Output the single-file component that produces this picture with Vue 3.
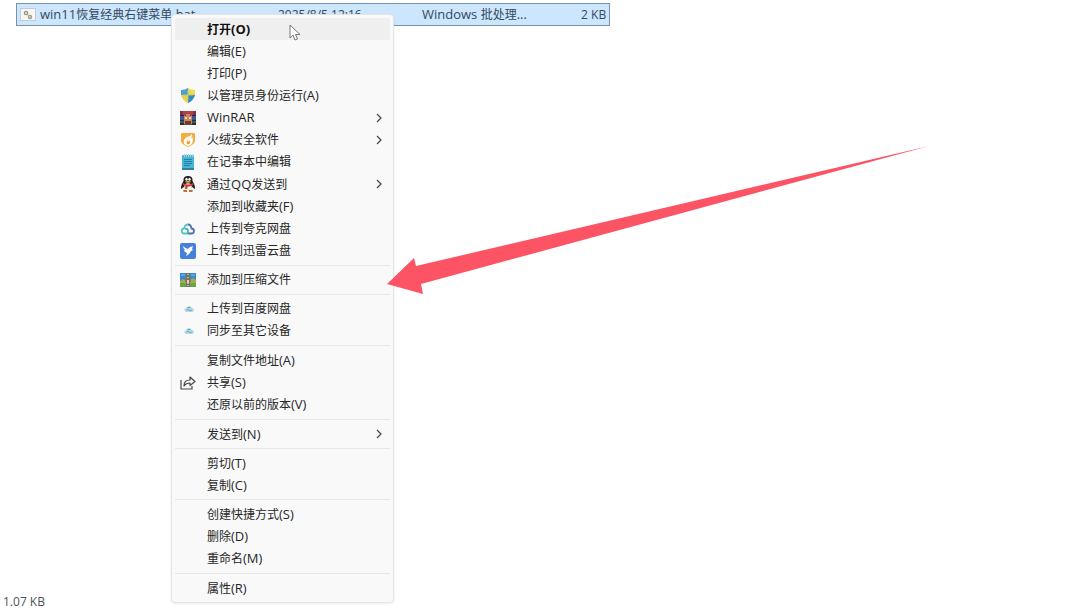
<template>
  <main class="explorer">
    <table class="file-list">
      <tbody>
        <tr>
          <td class="col-name">
            <div class="file-name">
              <svg class="file-icon" viewBox="0 0 16 14" aria-hidden="true">
                <rect x="0.5" y="0.5" width="15" height="12" fill="#f6f6f3" stroke="#c3ccd2" />
                <circle cx="6" cy="5" r="1.6" fill="none" stroke="#8b9190" stroke-width="1.4" />
                <circle cx="10" cy="9" r="1.5" fill="none" stroke="#9a9d94" stroke-width="1.4" />
                <path d="M7 6l2 2" stroke="#c4b878" stroke-width="1.5" />
              </svg>
              <span><span v-for="(part, i) in split('win11恢复经典右键菜单.bat')" :key="i" :class="{ latin: part.latin }">{{ part.text }}</span></span>
            </div>
          </td>
          <td class="col-date">2025/8/5 12:16</td>
          <td class="col-type"><span v-for="(part, i) in split('Windows 批处理...')" :key="i" :class="{ latin: part.latin }">{{ part.text }}</span></td>
          <td class="col-size">2 KB</td>
        </tr>
      </tbody>
    </table>

    <ul class="menu">
      <template v-for="(group, g) in groups" :key="g">
        <li v-if="g > 0" class="separator" role="separator"></li>
        <li v-for="item in group" :key="item.label" class="menu-row">
          <button type="button" class="menu-item" :class="{ active: item.active }">
            <span class="icon">
              <svg v-if="item.icon === 'shield'" viewBox="0 0 16 16">
                <path d="M8 0Q5 2 1 2v5h7z" fill="#4a9fd4" />
                <path d="M8 0q3 2 7 2v5H8z" fill="#f1d755" />
                <path d="M1 7h7v8Q2 12 1 7z" fill="#efce48" />
                <path d="M15 7H8v8q6-3 7-8z" fill="#2f89c6" />
                <path d="M8 2v11M3 7h10" stroke="#a8cf72" stroke-width="1" />
              </svg>
              <svg v-else-if="item.icon === 'winrar'" viewBox="0 0 16 16">
                <rect y="1" width="16" height="5" fill="#b0404c" />
                <rect y="6" width="16" height="4" fill="#3c5590" />
                <rect y="10" width="16" height="5" fill="#35604a" />
                <path d="M0 5.500h16M0 10.500h16" stroke="#3a2434" />
                <path d="M0 1h3v4H0zM13 1h3v4h-3z" fill="#7c3350" />
                <path d="M4 5l2 1V4h4v2l2-1v9H4z" fill="#c98462" />
                <path d="M5 7h2v2H5zM9 7h2v2H9z" fill="#f0d2ae" />
                <path d="M5 11h6v3H5z" fill="#73372f" />
                <path d="M0 13h4v2H0zM12 13h4v2h-4z" fill="#3a2832" />
              </svg>
              <svg v-else-if="item.icon === 'huorong'" viewBox="0 0 16 16">
                <path d="M2 1h12q1 0 1 1v7q0 3-7 6Q1 12 1 9V2q0-1 1-1z" fill="#f2ae3e" />
                <path d="M12 2q-1 2-5 3-4 2-3 6-1-1-1-3 0 5 5 6 5-1 5-6 0-2-1-3 0 1-1 2 1-3 1-5z" fill="#fffdf5" />
                <path d="M9 7q1 2-1 3-1-1 0-2-2 1-1 4 3 1 3-2 0-1-1-3z" fill="#f0982f" />
              </svg>
              <svg v-else-if="item.icon === 'notepad'" viewBox="0 0 16 16">
                <rect x="2" y="1" width="12" height="15" rx="1" fill="#48b4d6" />
                <path d="M2 14h12v1q0 1-1 1H3q-1 0-1-1z" fill="#347fa3" />
                <path d="M4 5.500h8M4 7.500h8M4 9.500h8M4 11.500h6" stroke="#2480a6" stroke-width="1" />
                <path d="M4.500 0v3M6.500 0v3M8.500 0v3M10.500 0v3M12.500 0v3" stroke="#a3d3e2" stroke-width="1" />
              </svg>
              <svg v-else-if="item.icon === 'qq'" viewBox="0 0 16 16">
                <path d="M8 0Q3 0 3.500 5L1.500 9q-1 3 0 4l2-2q4 4 9 0l2 2q1-1 0-4l-2-4Q13 0 8 0z" fill="#211d21" />
                <ellipse cx="8" cy="11" rx="3.800" ry="3.700" fill="#f7f4f1" />
                <ellipse cx="6.500" cy="3.300" rx="1.200" ry="1.500" fill="#fff" />
                <ellipse cx="9.500" cy="3.300" rx="1.200" ry="1.500" fill="#fff" />
                <ellipse cx="8" cy="5.800" rx="2.800" ry=".9" fill="#eeac35" />
                <path d="M3 7q5 3 10 0l.5 2Q11 10.500 8 10.500L7 13H5l.5-3L3 9z" fill="#d63b38" />
                <path d="M3 15q0-2 4-1v2H4zM13 15q0-2-4-1v2h3z" fill="#b9792d" />
              </svg>
              <svg v-else-if="item.icon === 'quark'" viewBox="0 0 16 16" fill="none" stroke-width="1.800">
                <path d="M8 12.500H4.500a2.500 2.500 0 0 1-.5-5Q5 3.500 8 3.500" stroke="#55c6bd" />
                <path d="M8 3.500q3 0 3.500 4a2.500 2.500 0 0 1 0 5H8" stroke="#4a76ac" />
                <path d="M8 12.500V10a2 2 0 0 0-3-2" stroke="#4aabc5" />
              </svg>
              <svg v-else-if="item.icon === 'xunlei'" viewBox="0 0 16 16">
                <rect width="16" height="16" rx="2" fill="#4680df" />
                <path d="M3 3q3 3 5 3 1-2 5-3l-1 3 1 1-2 1q-1 3-5 5l1-3q-3-1-3-3l1 0Q3 5 3 3z" fill="#fff" />
              </svg>
              <svg v-else-if="item.icon === 'archive'" viewBox="0 0 16 16">
                <rect y="1" width="16" height="8" fill="#3d87cf" />
                <rect y="9" width="16" height="6" fill="#69a643" />
                <path d="M0 9l3-2 3 2 4-1 3-2 3 2v3H0z" fill="#a0ad50" />
                <path d="M1 3h4M11 3h4" stroke="#5fa6df" stroke-width="2" />
                <rect x="6" y="1" width="4" height="14" fill="#6d7470" />
                <path d="M7 2.500h2M7 5.500h2M7 11.500h2M7 13.500h2" stroke="#c8b67f" />
                <rect x="5" y="7" width="6" height="3" fill="#94743f" />
                <rect x="7" y="8" width="2" height="3" fill="#e0d2aa" />
              </svg>
              <svg v-else-if="item.icon === 'cloud'" viewBox="0 0 16 16">
                <path d="M7 11a2 2 0 0 1-1-4q1-2 3-2t3 2a2 2 0 0 1 0 4z" fill="#b5dae8" />
                <path d="M6.500 9.500q1-2 2.500-.5t3 0M7.500 7q1.500-1.500 3 0" fill="none" stroke="#68a5be" />
              </svg>
              <svg v-else-if="item.icon === 'share'" viewBox="0 0 16 16" fill="none" stroke="#484848" stroke-width="1.200" stroke-linejoin="round">
                <path d="M1 5v9h11v-3" />
                <path d="M4 11q0-6 6-6V2l5 4.500-5 4V8Q6 8 4 11z" />
              </svg>
            </span>
            <span class="label"><span v-for="(part, i) in split(item.label)" :key="i" :class="{ latin: part.latin }">{{ part.text }}</span></span>
            <svg v-if="item.sub" class="chevron" viewBox="0 0 6 10" aria-hidden="true">
              <path d="M1 1l4 4-4 4" fill="none" stroke="#444" stroke-width="1.200" />
            </svg>
          </button>
        </li>
      </template>
    </ul>

    <svg class="cursor" viewBox="0 0 12 18" aria-hidden="true">
      <path d="M1 1v13l3-3 2 5 2.500-1-2-4.500H11z" fill="#fff" stroke="#777" stroke-linejoin="round" />
    </svg>

    <svg class="arrow" viewBox="0 0 542 148" aria-hidden="true">
      <path d="M0 138L27 112l2 8L542 0 34 138l2 10z" fill="#fc5464" />
    </svg>

    <footer class="status">1.07 KB</footer>
  </main>
</template>

<script setup>
const groups = [
  [
    { label: '打开(O)', active: true },
    { label: '编辑(E)' },
    { label: '打印(P)' },
    { label: '以管理员身份运行(A)', icon: 'shield' },
    { label: 'WinRAR', icon: 'winrar', sub: true },
    { label: '火绒安全软件', icon: 'huorong', sub: true },
    { label: '在记事本中编辑', icon: 'notepad' },
    { label: '通过QQ发送到', icon: 'qq', sub: true },
    { label: '添加到收藏夹(F)' },
    { label: '上传到夸克网盘', icon: 'quark' },
    { label: '上传到迅雷云盘', icon: 'xunlei' }
  ],
  [{ label: '添加到压缩文件', icon: 'archive' }],
  [
    { label: '上传到百度网盘', icon: 'cloud' },
    { label: '同步至其它设备', icon: 'cloud' }
  ],
  [
    { label: '复制文件地址(A)' },
    { label: '共享(S)', icon: 'share' },
    { label: '还原以前的版本(V)' }
  ],
  [{ label: '发送到(N)', sub: true }],
  [{ label: '剪切(T)' }, { label: '复制(C)' }],
  [
    { label: '创建快捷方式(S)' },
    { label: '删除(D)' },
    { label: '重命名(M)' }
  ],
  [{ label: '属性(R)' }]
]

// latin runs are set one size larger than the Chinese ones
const split = (text) =>
  text.match(/[\x20-\x7e]+|[^\x20-\x7e]+/g).map((part) => ({
    text: part,
    latin: /^[\x20-\x7e]/.test(part)
  }))
</script>

<style>
body {
  margin: 0;
  background: #fff;
}
</style>

<style scoped>
.explorer {
  position: relative;
  display: flex;
  flex-direction: column;
  justify-content: space-between;
  box-sizing: border-box;
  min-height: 100vh;
  padding: 3px 3px 0 16px;
  overflow: hidden;
  font-family: "Open Sans", "Noto Sans CJK SC", sans-serif;
  font-size: 12px;
  color: #333;
}

.latin {
  font-size: 13px;
}

.file-list {
  width: 56%;
  height: 23px;
  border: 1px solid #7893aa;
  border-spacing: 0;
  table-layout: fixed;
  background: #cce6fd;
  color: #35495c;
}

.file-list td {
  padding: 0;
  line-height: 20px;
  white-space: nowrap;
}

.file-list .col-name {
  width: 261px;
}

.file-list .col-date {
  width: 144px;
}

.file-list .col-size {
  padding-right: 3px;
  text-align: right;
}

.file-name {
  display: flex;
  align-items: center;
  gap: 4px;
  padding-left: 3px;
}

.file-icon {
  width: 16px;
  height: 14px;
}

/* context menu */
.menu {
  position: absolute;
  top: 14px;
  bottom: 10px;
  left: 171px;
  display: flex;
  flex-direction: column;
  box-sizing: border-box;
  width: 223px;
  margin: 0;
  padding: 3px;
  list-style: none;
  background: #f9f9f9;
  border: 1px solid #e5e5e5;
  border-radius: 4px;
  box-shadow: 0 1px 3px rgba(0, 0, 0, 0.08);
}

.menu-row {
  display: flex;
  flex: 1;
}

.menu-item {
  display: flex;
  align-items: center;
  width: 100%;
  padding: 0 8px 0 5px;
  border: 0;
  border-radius: 2px;
  background: none;
  color: #262626;
  font-family: inherit;
  font-size: 12px;
  line-height: 20px;
  text-align: left;
}

.menu-item.active {
  background: #efefef;
  color: #111;
  font-weight: bold;
}

.icon {
  display: flex;
  width: 16px;
  height: 16px;
  margin-right: 11px;
}

.label {
  flex: 1;
  white-space: nowrap;
}

.chevron {
  width: 6px;
  height: 10px;
}

.separator {
  height: 1px;
  margin: 3px 0;
  background: #e8e8e8;
}

.cursor {
  position: absolute;
  top: 24px;
  left: 289px;
  width: 12px;
  height: 18px;
}

.arrow {
  position: absolute;
  top: 146px;
  left: 387px;
  width: 542px;
  height: 148px;
}

.status {
  margin-left: -13px;
  line-height: 22px;
  color: #4c5558;
}
</style>
